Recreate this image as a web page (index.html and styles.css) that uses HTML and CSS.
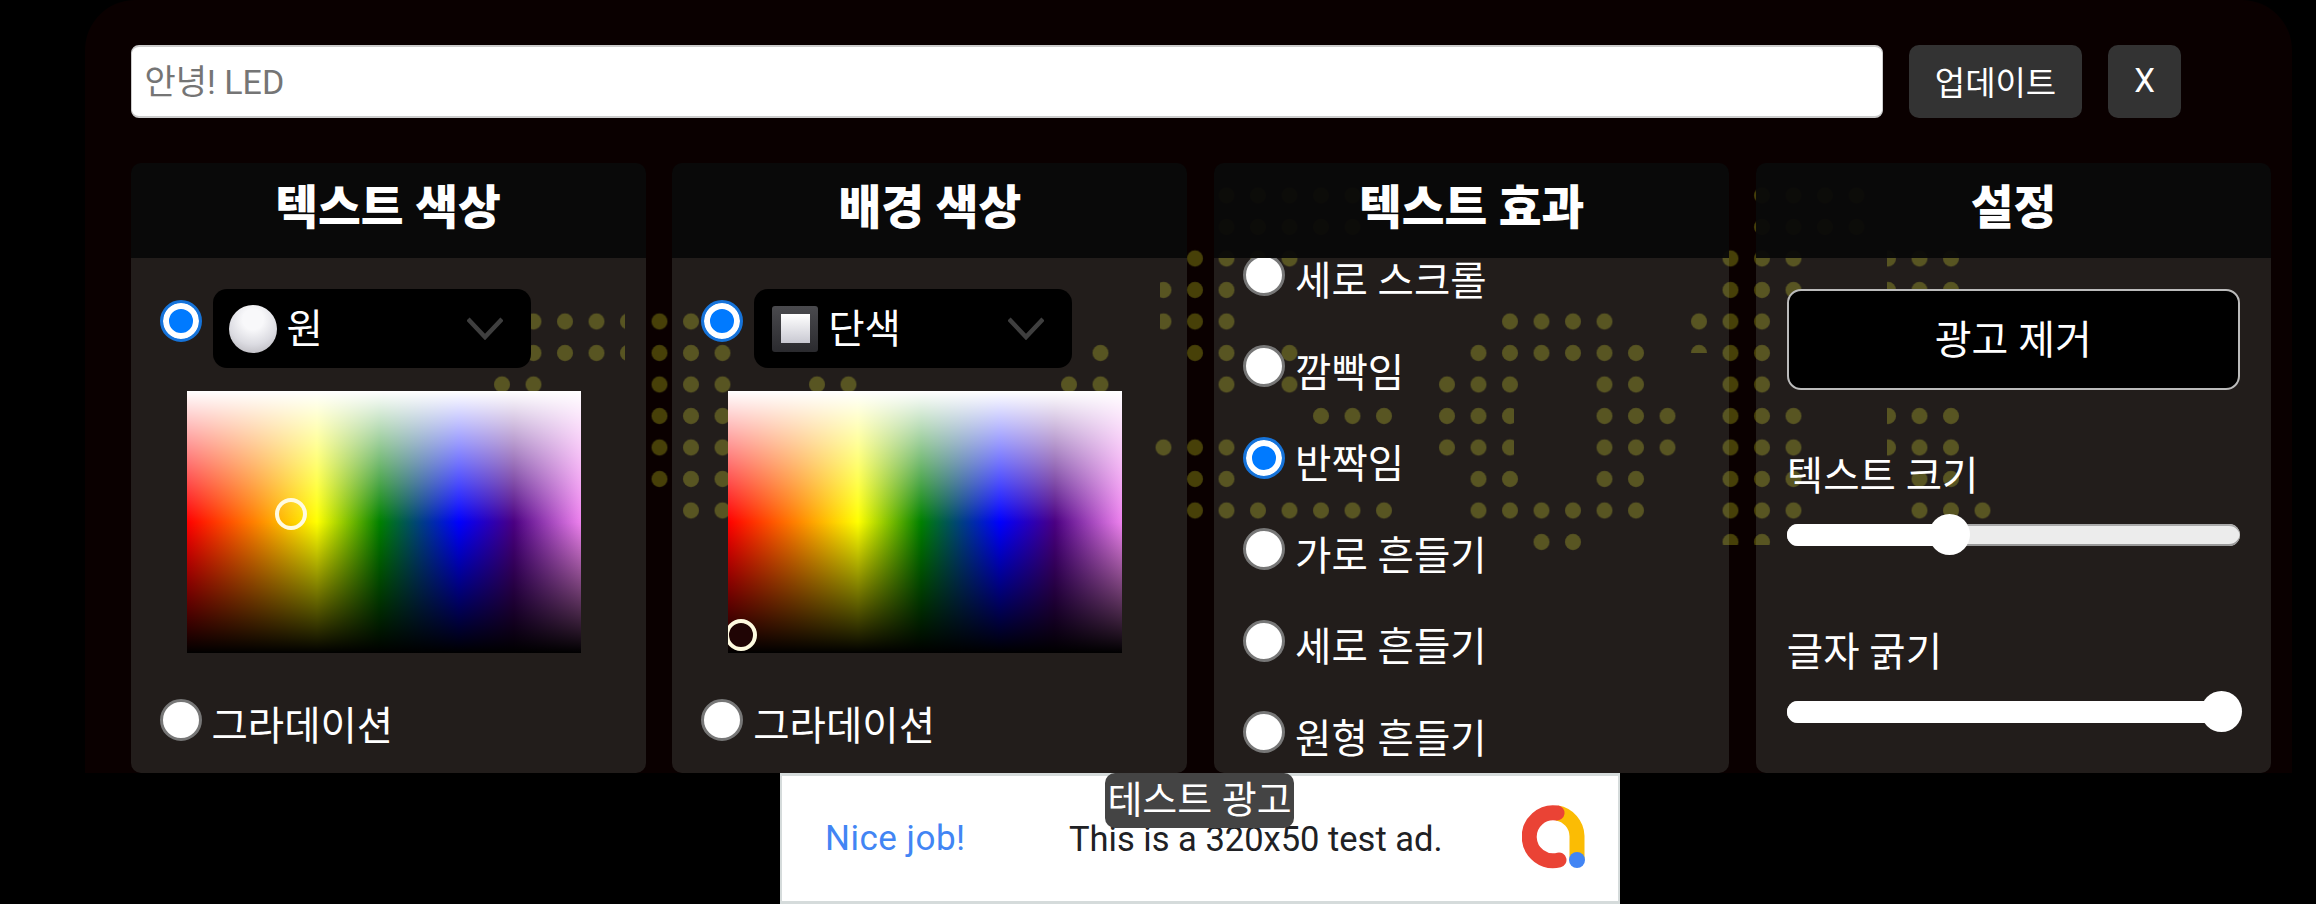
FILE: index.html
```html
<!DOCTYPE html>
<html lang="ko">
<head>
    <meta charset="UTF-8">
    <meta name="viewport" content="width=device-width, initial-scale=1.0">
    <title>LED</title>
    <link rel="stylesheet" href="styles.css">
</head>
<body>
    <div class="dialog">
        <!-- LED board showing through the panels, coordinates are page pixels -->
        <svg class="led-board" width="2207" height="773" viewBox="85 0 2207 773">
            <defs>
                <pattern id="led-dots" patternUnits="userSpaceOnUse" x="1494.25" y="242.75" width="31.5" height="31.5">
                    <circle cx="15.75" cy="15.75" r="8" fill="#474008"/>
                </pattern>
            </defs>
            <g fill="url(#led-dots)">
                <rect x="517.75" y="305.75" width="107.25" height="63"/>
                <rect x="486.25" y="368.75" width="63" height="31.5"/>
                <rect x="643.75" y="305.75" width="94.5" height="189"/>
                <rect x="675.25" y="494.75" width="63" height="31.5"/>
                <rect x="801.25" y="368.75" width="63" height="31.5"/>
                <rect x="1053.25" y="368.75" width="63" height="31.5"/>
                <rect x="1084.75" y="337.25" width="31.5" height="31.5"/>
                <rect x="1160" y="274.25" width="19.25" height="63"/>
                <rect x="1179.25" y="242.75" width="31.5" height="126"/>
                <rect x="1210.75" y="274.25" width="31.5" height="126"/>
                <rect x="1210.75" y="242.75" width="94.5" height="31.5"/>
                <rect x="1148" y="431.75" width="31.25" height="31.5"/>
                <rect x="1179.25" y="431.75" width="63" height="94.5"/>
                <rect x="1242.25" y="494.75" width="157.5" height="31.5"/>
                <rect x="1305.25" y="400.25" width="94.5" height="31.5"/>
                <rect x="1273.75" y="337.25" width="31.5" height="63"/>
                <rect x="1431.25" y="368.75" width="31.5" height="94.5"/>
                <rect x="1462.75" y="337.25" width="31.5" height="189"/>
                <rect x="1494.25" y="305.75" width="31.5" height="94.5"/>
                <rect x="1494.25" y="400.25" width="19.75" height="63"/>
                <rect x="1494.25" y="463.25" width="31.5" height="63"/>
                <rect x="1525.75" y="305.75" width="63" height="63"/>
                <rect x="1525.75" y="494.75" width="63" height="63"/>
                <rect x="1588.75" y="305.75" width="31.5" height="220.5"/>
                <rect x="1620.25" y="337.25" width="31.5" height="189"/>
                <rect x="1651.75" y="400.25" width="31.5" height="63"/>
                <rect x="1683.25" y="305.75" width="31.5" height="47.25"/>
                <rect x="1714.75" y="242.75" width="63" height="302.25"/>
                <rect x="1777.75" y="242.75" width="31.5" height="63"/>
                <rect x="1777.75" y="400.25" width="31.5" height="126"/>
                <rect x="1887" y="242.75" width="79.75" height="63"/>
                <rect x="1887" y="400.25" width="79.75" height="63"/>
                <rect x="1903.75" y="463.25" width="63" height="63"/>
                <rect x="1966.75" y="494.75" width="31.5" height="31.5"/>
                <rect x="1210.75" y="179.75" width="157.5" height="63"/>
                <rect x="1746" y="179.75" width="126" height="63"/>
            </g>
        </svg>

        <div class="text-row">
            <input class="text-input" type="text" placeholder="안녕! LED">
            <button class="btn update-btn">업데이트</button>
            <button class="btn close-btn">X</button>
        </div>

        <div class="columns">
            <section class="col">
                <h2 class="col-head">텍스트 색상</h2>
                <div class="col-body">
                    <div class="select-row">
                        <span class="radio checked"></span>
                        <div class="dropdown">
                            <span class="swatch-circle"></span>
                            <span class="dropdown-text">원</span>
                            <svg class="chevron" width="36" height="23" viewBox="0 0 36 23"><path d="M1 2 L18 20 L35 2" fill="none" stroke="#3f3f3f" stroke-width="4.5"/></svg>
                        </div>
                    </div>
                    <div class="picker">
                        <span class="picker-dot" style="left: 104px; top: 123px"></span>
                    </div>
                    <div class="radio-row gradient-row">
                        <span class="radio"></span>
                        <span class="radio-label">그라데이션</span>
                    </div>
                </div>
            </section>

            <section class="col">
                <h2 class="col-head">배경 색상</h2>
                <div class="col-body">
                    <div class="select-row">
                        <span class="radio checked"></span>
                        <div class="dropdown">
                            <span class="swatch-square"><span class="swatch-square-inner"></span></span>
                            <span class="dropdown-text">단색</span>
                            <svg class="chevron" width="36" height="23" viewBox="0 0 36 23"><path d="M1 2 L18 20 L35 2" fill="none" stroke="#3f3f3f" stroke-width="4.5"/></svg>
                        </div>
                    </div>
                    <div class="picker">
                        <span class="picker-dot dark" style="left: 13px; top: 244px"></span>
                    </div>
                    <div class="radio-row gradient-row">
                        <span class="radio"></span>
                        <span class="radio-label">그라데이션</span>
                    </div>
                </div>
            </section>

            <section class="col">
                <h2 class="col-head">텍스트 효과</h2>
                <div class="col-body">
                    <div class="effect-list">
                        <div class="radio-row"><span class="radio"></span><span class="radio-label">세로 스크롤</span></div>
                        <div class="radio-row"><span class="radio"></span><span class="radio-label">깜빡임</span></div>
                        <div class="radio-row"><span class="radio checked"></span><span class="radio-label">반짝임</span></div>
                        <div class="radio-row"><span class="radio"></span><span class="radio-label">가로 흔들기</span></div>
                        <div class="radio-row"><span class="radio"></span><span class="radio-label">세로 흔들기</span></div>
                        <div class="radio-row"><span class="radio"></span><span class="radio-label">원형 흔들기</span></div>
                    </div>
                </div>
            </section>

            <section class="col">
                <h2 class="col-head">설정</h2>
                <div class="col-body settings">
                    <button class="remove-ads">광고 제거</button>
                    <div class="setting-label size-label">텍스트 크기</div>
                    <div class="slider"><div class="slider-fill" style="width: 36%"><span class="slider-thumb"></span></div></div>
                    <div class="setting-label weight-label">글자 굵기</div>
                    <div class="slider"><div class="slider-fill" style="width: 96%"><span class="slider-thumb"></span></div></div>
                </div>
            </section>
        </div>
    </div>

    <div class="ad">
        <span class="ad-badge">테스트 광고</span>
        <span class="ad-title">Nice job!</span>
        <span class="ad-text">This is a 320x50 test ad.</span>
        <svg class="ad-logo" width="64" height="64" viewBox="0 0 64 64">
            <path d="M35 8 A24 24 0 0 1 55 31 L55 55" fill="none" stroke="#fbbc04" stroke-width="15"/>
            <path d="M35 8 A24 24 0 1 0 37 55" fill="none" stroke="#ea4335" stroke-width="15" stroke-linecap="round"/>
            <circle cx="55" cy="55" r="8" fill="#4285f4"/>
        </svg>
    </div>
</body>
</html>
```

FILE: styles.css
```css
* {
    box-sizing: border-box;
}

html, body {
    margin: 0;
    height: 904px;
    overflow: hidden;
}

body {
    background-color: #000;
    color: #fff;
    font-family: Roboto, "Noto Sans CJK KR", sans-serif;
}

.dialog {
    position: relative;
    width: 2207px;
    height: 773px;
    margin-left: 85px;
    padding: 45px 21px 0 45.5px;
    background-color: #0a0000;
    border-radius: 50px 50px 0 0;
}

.led-board {
    position: absolute;
    top: 0;
    left: 0;
    filter: blur(0.7px);
}

/* top row */
.text-row {
    position: relative;
    display: flex;
    gap: 26px;
    height: 73px;
    padding-right: 90px;
}

.text-input {
    flex: 1;
    min-width: 0;
    padding: 0 13px;
    background-color: #fff;
    border: 1px solid #ccc;
    border-width: 2px 1px;
    border-radius: 8px;
    font-family: inherit;
    font-size: 34px;
}

.text-input::placeholder {
    color: #757575;
}

.btn {
    height: 73px;
    padding-bottom: 3px;
    background-color: #333;
    color: #fff;
    border: none;
    border-radius: 10px;
    font-family: inherit;
    font-size: 33px;
}

.update-btn {
    width: 173px;
}

.close-btn {
    width: 73px;
}

/* panels */
.columns {
    position: relative;
    z-index: 1;
    display: grid;
    grid-template-columns: repeat(4, 1fr);
    column-gap: 26.67px;
    height: 610px;
    margin-top: 45px;
}

.col {
    display: flex;
    flex-direction: column;
    min-width: 0;
    border-radius: 10px;
    overflow: hidden;
}

.col-head {
    height: 95px;
    margin: 0;
    background-color: rgba(10, 10, 10, 0.95);
    font-size: 46.5px;
    font-weight: 900;
    line-height: 91px;
    text-align: center;
}

.col-body {
    flex: 1;
    min-height: 0;
    padding-top: 31px;
    background-color: rgba(227, 252, 235, 0.115);
    overflow: hidden;
}

.select-row {
    display: flex;
    align-items: flex-start;
    gap: 11px;
    padding-left: 29px;
}

.radio {
    flex: none;
    width: 42px;
    height: 42px;
    background-color: #fff;
    border: 3px solid #777;
    border-radius: 50%;
}

.radio.checked {
    background-color: #007aff;
    border-color: #1673d9;
    box-shadow: inset 0 0 0 6px #fff;
}

.select-row .radio {
    margin-top: 11px;
}

.dropdown {
    display: flex;
    align-items: center;
    width: 318px;
    height: 79px;
    padding-left: 16px;
    background-color: #000;
    border-radius: 14px;
}

.dropdown-text {
    flex: 1;
    margin: -7px 0 0 10px;
    font-size: 39.5px;
}

.swatch-circle {
    width: 48px;
    height: 48px;
    background: radial-gradient(circle at 50% 30%, #f8f8fa 25%, #dcdce2 60%, #aeacb2 100%);
    border-radius: 50%;
}

.swatch-square {
    display: flex;
    align-items: center;
    justify-content: center;
    width: 46px;
    height: 46px;
    margin-left: 2px;
    background: linear-gradient(#4a4a4e, #2a2a2e);
    border-radius: 3px;
}

.swatch-square-inner {
    width: 29px;
    height: 29px;
    background: linear-gradient(#fff, #c9c9d2);
}

.chevron {
    margin-right: 28px;
}

.picker {
    position: relative;
    width: 394px;
    height: 262px;
    margin: 23px 0 0 56px;
    background:
        linear-gradient(to bottom, #fff, rgba(255, 255, 255, 0) 50%, rgba(0, 0, 0, 0) 50%, #000),
        linear-gradient(to right, #f00, #ff8000 17%, #ff0 33%, #008000 49%, #00f 69%, #4b0082 83%, #ee82ee);
    overflow: hidden;
}

.picker-dot {
    position: absolute;
    width: 32px;
    height: 32px;
    border: 4px solid #fffbe0;
    border-radius: 50%;
    transform: translate(-50%, -50%);
}

.picker-dot.dark {
    background-color: #200505;
}

.radio-row {
    display: flex;
    align-items: flex-start;
    gap: 10px;
    height: 54px;
    padding-left: 29px;
}

.radio-row .radio {
    margin-top: -1.5px;
}

.radio-label {
    font-size: 39.5px;
    line-height: 54px;
    white-space: nowrap;
}

.gradient-row {
    margin-top: 47px;
}

.effect-list {
    display: flex;
    flex-direction: column;
    gap: 37.5px;
    margin-top: -34px;
}

/* settings */
.settings {
    padding-left: 31px;
    padding-right: 31px;
}

.remove-ads {
    width: 453px;
    height: 101px;
    padding-bottom: 6px;
    background-color: #000;
    color: #fff;
    border: 2px solid #bbb;
    border-radius: 14px;
    font-family: inherit;
    font-size: 40px;
}

.setting-label {
    font-size: 39.5px;
    line-height: 54px;
}

.size-label {
    margin-top: 60px;
    margin-bottom: 20px;
}

.weight-label {
    margin-top: 80px;
    margin-bottom: 21px;
}

.slider {
    width: 453px;
    height: 22px;
    background-color: #ececec;
    border-radius: 11px;
    box-shadow: inset 0 -2px 0 #999, inset 0 2px 0 #aaa;
}

.slider-fill {
    position: relative;
    height: 22px;
    background-color: #fff;
    border-radius: 11px;
}

.slider-thumb {
    position: absolute;
    top: -10px;
    right: -20px;
    width: 41px;
    height: 41px;
    background-color: #fff;
    border-radius: 50%;
}

/* test ad at the bottom */
.ad {
    position: relative;
    display: flex;
    align-items: center;
    width: 840px;
    height: 131px;
    margin-left: 780px;
    padding: 0 32px 0 43px;
    background-color: #fff;
    border: 1px solid #d5dbdb;
    border-width: 3px 2px;
    color: #202124;
    font-size: 34.5px;
}

.ad-badge {
    position: absolute;
    top: -3px;
    left: 323px;
    width: 189px;
    height: 55px;
    background-color: #444;
    border-radius: 10px;
    color: #fff;
    font-size: 38px;
    line-height: 54px;
    text-align: center;
    white-space: nowrap;
}

.ad-title {
    width: 244px;
    color: #4285f4;
    font-size: 35px;
    letter-spacing: 0.5px;
}

.ad-text {
    margin-top: 1px;
}

.ad-logo {
    margin: -4px 0 0 auto;
}
```
